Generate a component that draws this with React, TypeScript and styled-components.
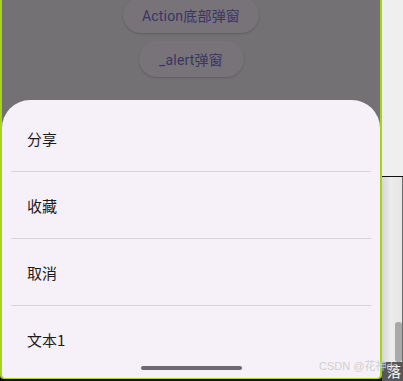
import React from "react";
import styled, { createGlobalStyle } from "styled-components";

const Global = createGlobalStyle`
  html, body { margin: 0; padding: 0; background: #efefef; }
  body { font-family: Roboto, "Noto Sans CJK SC", sans-serif; }
  #root { width: 403px; height: 381px; overflow: hidden; }
`;

const Page = styled.div`
  position: relative;
  display: flex;
  width: 403px;
  height: 381px;
  overflow: hidden;
`;

const PhoneColumn = styled.div`
  display: flex;
  flex-direction: column;
  width: 382px;
  height: 381px;
  background: #0c0c0c;
`;

const Phone = styled.div`
  position: relative;
  box-sizing: border-box;
  width: 382px;
  height: 379px;
  border: 2px solid #a6d41a;
  border-top: none;
  border-bottom-width: 1px;
  border-bottom-left-radius: 4px;
  border-bottom-right-radius: 4px;
  background: #747174;
  display: flex;
  flex-direction: column;
  align-items: center;
  overflow: hidden;
`;

const ButtonStack = styled.div`
  display: flex;
  flex-direction: column;
  align-items: center;
  gap: 8px;
  margin-top: -3px;
`;

const PillButton = styled.div<{ $w: number }>`
  width: ${(p) => p.$w}px;
  height: 36px;
  border-radius: 18px;
  background: #777379;
  box-shadow: 0 1px 2px rgba(0, 0, 0, 0.18);
  display: flex;
  align-items: center;
  justify-content: center;
  color: #3b3366;
  font-family: Roboto, "Noto Sans CJK SC", sans-serif;
  font-size: 14px;
  font-weight: 400;
  letter-spacing: 0.2px;
`;

const Sheet = styled.div`
  position: relative;
  margin-top: auto;
  box-sizing: border-box;
  width: 378px;
  height: 278px;
  background: #f6f1f8;
  border-radius: 28px 28px 2px 2px;
  padding-top: 5px;
  display: flex;
  flex-direction: column;
`;

const Row = styled.div`
  height: 66px;
  display: flex;
  align-items: center;
  padding-left: 25px;
  color: #1d1b20;
  font-family: "Noto Sans CJK SC", Roboto, sans-serif;
  font-size: 15px;
`;

const Divider = styled.div`
  height: 1px;
  margin: 0 9px;
  background: #d8d3da;
`;

const Handle = styled.div`
  position: absolute;
  left: 139px;
  bottom: 8px;
  width: 101px;
  height: 4px;
  border-radius: 2px;
  background: #6c6a6e;
`;

const Bottom = styled.div`
  height: 2px;
  background: #0c0c0c;
`;

const Side = styled.div`
  width: 21px;
  height: 381px;
  display: flex;
  flex-direction: column;
`;

const SideTop = styled.div`
  height: 176px;
  background: #efefef;
  border-bottom: 1px solid #111;
`;

const ScrollArea = styled.div`
  position: relative;
  flex: 1;
  background: linear-gradient(to right, #d6d6d6, #ececec 45%, #e6e6e6);
  border-right: 1px solid #6a6a6a;
`;

const Thumb = styled.div`
  position: absolute;
  left: 13px;
  top: 145px;
  width: 7px;
  height: 40px;
  border-radius: 3px;
  background: #a9a9a9;
`;

const SideFoot = styled.div`
  height: 19px;
  background: #575757;
  color: #ffffff;
  font-family: "Noto Sans CJK SC", sans-serif;
  font-size: 14px;
  line-height: 19px;
  text-align: right;
  padding-right: 2px;
  overflow: hidden;
`;

const Watermark = styled.div`
  position: absolute;
  right: 5px;
  bottom: 8px;
  color: rgba(205, 205, 205, 0.95);
  font-family: "Liberation Sans", "Noto Sans CJK SC", sans-serif;
  font-size: 11px;
  white-space: nowrap;
`;

const items = ["分享", "收藏", "取消", "文本1"];

export default function App() {
  return (
    <>
      <Global />
      <Page>
        <PhoneColumn>
          <Phone>
            <ButtonStack>
              <PillButton $w={136}>Action底部弹窗</PillButton>
              <PillButton $w={105}>_alert弹窗</PillButton>
            </ButtonStack>
            <Sheet>
              {items.map((t, i) => (
                <React.Fragment key={t}>
                  <Row>{t}</Row>
                  {i < items.length - 1 && <Divider />}
                </React.Fragment>
              ))}
              <Handle />
            </Sheet>
          </Phone>
          <Bottom />
        </PhoneColumn>
        <Side>
          <SideTop />
          <ScrollArea>
            <Thumb />
          </ScrollArea>
          <SideFoot>落</SideFoot>
        </Side>
        <Watermark>CSDN @花神ds</Watermark>
      </Page>
    </>
  );
}
